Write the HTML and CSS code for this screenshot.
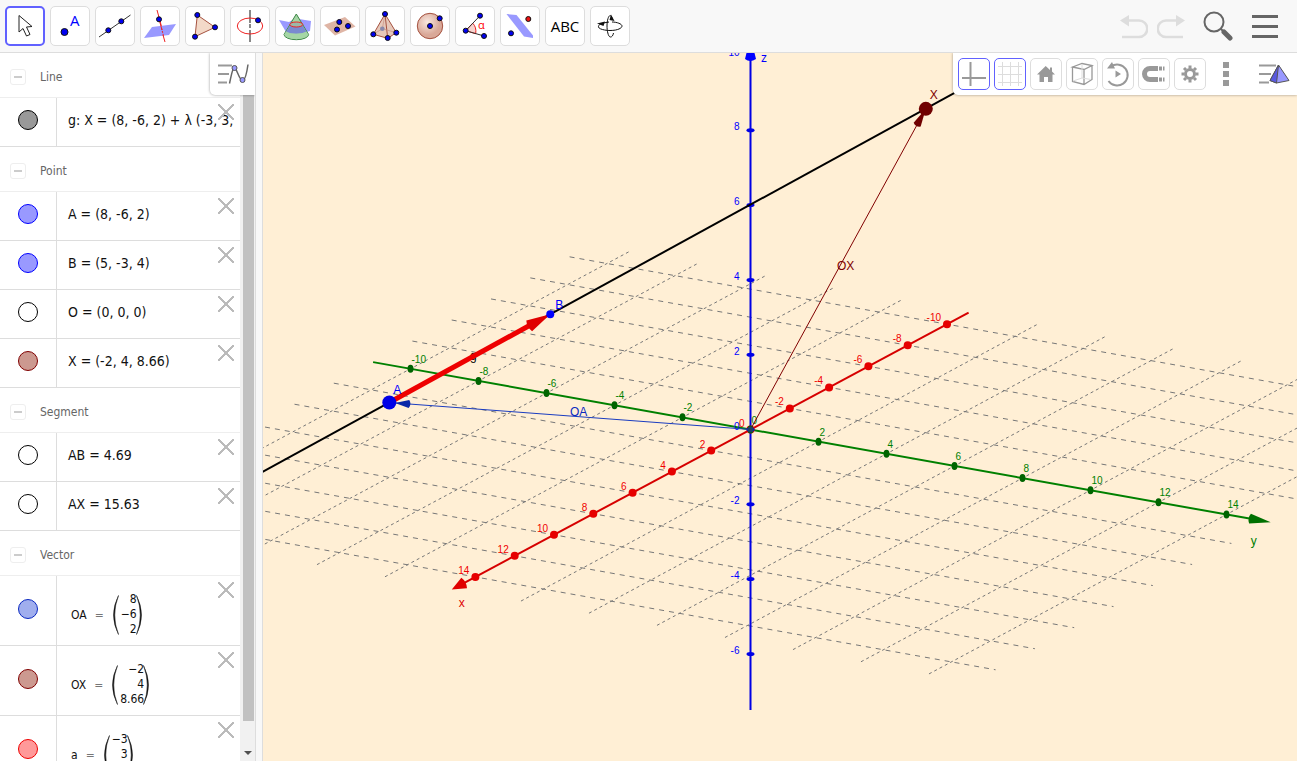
FILE: index.html
```
<!DOCTYPE html>
<html lang="en">
<head>
    <meta charset="UTF-8">
    <meta name="viewport" content="width=device-width, initial-scale=1.0">
    <title>3D Calculator</title>
    <link rel="stylesheet" href="styles.css">
</head>
<body>
    <header class="toolbar">
        <div class="tools">
            <button class="tool selected" aria-label="Move">
                <svg viewBox="0 0 40 40"><path d="M14 9.5V26l4-3.5 3.5 7.5 3.5-1.5-3.5-7.5 5.5-.5z" fill="#fff" stroke="#222"/></svg>
            </button>
            <button class="tool" aria-label="Point">
                <svg viewBox="0 0 40 40"><circle class="pt" cx="14.5" cy="26" r="3.5"/><text x="20" y="20" class="icon-a">A</text></svg>
            </button>
            <button class="tool" aria-label="Line">
                <svg viewBox="0 0 40 40"><path d="M4 31 35.5 9" stroke="#333"/><circle class="pt" cx="13.3" cy="24.3" r="2.5"/><circle class="pt" cx="26.3" cy="15.3" r="2.5"/></svg>
            </button>
            <button class="tool" aria-label="Perpendicular line">
                <svg viewBox="0 0 40 40"><path d="M17 4l6 22" stroke="#e22"/><path d="M4 32l8-11 24-3-7 11z" fill="#99f"/><path d="M19 13l3 11M23 29l2 7" stroke="#e22"/><path d="M21.5 22l2 8" stroke="#e22" stroke-dasharray="2 1"/><circle class="pt" cx="19" cy="13.3" r="2.5"/></svg>
            </button>
            <button class="tool" aria-label="Polygon">
                <svg viewBox="0 0 40 40"><path d="M12.3 9 30 21.3 10 30.7z" fill="#f3d9c8" stroke="#a55240"/><circle class="pt" cx="12.3" cy="9" r="2.5"/><circle class="pt" cx="30" cy="21.3" r="2.5"/><circle class="pt" cx="10" cy="30.7" r="2.5"/></svg>
            </button>
            <button class="tool" aria-label="Circle with axis">
                <svg viewBox="0 0 40 40"><path d="M20 4v13M20 27v9" stroke="#888" stroke-width="2"/><path d="M20 18v9" stroke="#888" stroke-dasharray="4 2" stroke-width="2"/><ellipse cx="20" cy="20" rx="12.7" ry="8" fill="none" stroke="#e22"/><circle class="pt" cx="28" cy="14.3" r="2.5"/></svg>
            </button>
            <button class="tool" aria-label="Intersect two surfaces">
                <svg viewBox="0 0 40 40"><path d="M4 14l10 2 5-3h5l12 2-1 10-11 3-13-2z" fill="#99f"/><path d="M21.3 8 9 28.500h24.600z" fill="#8cc48c"/><path d="M21.3 8 9 28.5a12.3 5.2 0 0 0 24.6 0z" fill="#a5d5a5" stroke="#3f8748"/><path d="M15.500 18.500l-4.500 7c5 3 15 3 20.500 0l-4.500-7z" fill="#7a8ad0"/><path d="M11 25.500c5 3 15 3 20.500 0l2 3a12.3 5.2 0 0 1-24.500 0z" fill="#a5d5a5" fill-opacity=".7"/><ellipse cx="21.3" cy="18.5" rx="6.5" ry="2.500" fill="#9cb8a8" stroke="#e22"/></svg>
            </button>
            <button class="tool" aria-label="Plane through 3 points">
                <svg viewBox="0 0 40 40"><path d="M4 19l21-8 10.5 9.5L15 29.5z" fill="#dfb5a5"/><circle class="pt" cx="19.3" cy="16" r="2.5"/><circle class="pt" cx="28" cy="20" r="2.5"/><circle class="pt" cx="17" cy="23.5" r="2.5"/></svg>
            </button>
            <button class="tool" aria-label="Pyramid">
                <svg viewBox="0 0 40 40"><path d="M20 8 8.300 28.300l14.400 4 8.600-5.600z" fill="#e6c8ba" stroke="#a55240"/><path d="M20 8l2.700 24.300" stroke="#a55240"/><path d="M20 8l-2.700 15M8.300 28.300l9-5.600 14 4" stroke="#c08878" stroke-width=".6"/><circle cx="17.3" cy="22.7" r="2.3" fill="#8a8aaa"/><circle class="pt" cx="20" cy="8" r="2.5"/><circle class="pt" cx="8.3" cy="28.3" r="2.5"/><circle class="pt" cx="22.7" cy="32" r="2.5"/><circle class="pt" cx="31.3" cy="26.7" r="2.5"/></svg>
            </button>
            <button class="tool" aria-label="Sphere">
                <svg viewBox="0 0 40 40">
                    <radialGradient id="ball" cx="40%" cy="35%"><stop offset="0" stop-color="#f8e8e0"/><stop offset="1" stop-color="#d9a898"/></radialGradient>
                    <circle cx="20" cy="20" r="12.7" fill="url(#ball)" stroke="#a55240"/><circle class="pt" cx="20" cy="20" r="2.5"/><circle class="pt" cx="29.7" cy="12.3" r="2.5"/>
                </svg>
            </button>
            <button class="tool" aria-label="Angle">
                <svg viewBox="0 0 40 40"><path d="M10.7 24.7l7-7.5q4 4 3 10.5z" fill="#f8d5d0" stroke="#e22"/><path d="M25 9.7 10.7 24.7 29 30" fill="none" stroke="#333"/><text x="23" y="23" class="icon-alpha">α</text><circle class="pt" cx="25" cy="9.7" r="2.5"/><circle class="pt" cx="10.7" cy="24.7" r="2.5"/><circle class="pt" cx="29" cy="30" r="2.5"/></svg>
            </button>
            <button class="tool" aria-label="Reflect about plane">
                <svg viewBox="0 0 40 40"><path d="M6.5 8l10 1L33 29.5V32l-9-1.500z" fill="#99f"/><circle class="pt red" cx="28.3" cy="13" r="2.5"/><circle class="pt" cx="11" cy="27.3" r="2.5"/></svg>
            </button>
            <button class="tool">ABC</button>
            <button class="tool" aria-label="Rotate 3D view">
                <svg viewBox="0 0 40 40"><path d="M11 17.5C3 23 16 24.5 20 24.500c8 0 12-2.500 12-4.500s-5-4-10-4" fill="none" stroke="#111"/><path d="M22 12c-2-6-5 0-5 8 0 4 1 11 3.500 11 1.500 0 2.500-1.500 3-4M19 16l-6 1" fill="none" stroke="#111"/><path d="M7 17.5l8-2-1.500 4.500zM21 8.500l3.500 6.500-5-1z" fill="#111"/></svg>
            </button>
        </div>
        <div class="actions">
            <button aria-label="Undo" disabled>
                <svg width="28" height="28" viewBox="0 0 28 28"><path d="M6 8.5h13a8 8 0 0 1 0 16.500H2" fill="none" stroke="#ddd" stroke-width="2.5"/><path d="M0 8.5 9 3v11.500z" fill="#ddd"/></svg>
            </button>
            <button aria-label="Redo" disabled>
                <svg width="28" height="28" viewBox="0 0 28 28"><path d="M22 8.5H9A8 8 0 0 0 9 25h17" fill="none" stroke="#ddd" stroke-width="2.5"/><path d="M28 8.5 19 3v11.500z" fill="#ddd"/></svg>
            </button>
            <button class="search" aria-label="Search">
                <svg width="30" height="30" viewBox="0 0 30 30"><circle cx="11" cy="11" r="9.5" fill="none" stroke="#666" stroke-width="2"/><path d="M17.5 17.5l4 4" stroke="#666" stroke-width="2"/><path d="M21 21l6 6" stroke="#666" stroke-width="5" stroke-linecap="round"/></svg>
            </button>
            <button class="menu" aria-label="Menu">
                <svg width="28" height="28" viewBox="0 0 28 28"><path d="M1 4.5h26M1 14.5h26M1 24.5h26" stroke="#666" stroke-width="3"/></svg>
            </button>
        </div>
    </header>

    <main class="workspace">
        <aside class="algebra">
            <div class="objects">
                <h2><button class="collapse" aria-label="Collapse lines"></button>Line</h2>
                <div class="row">
                    <button class="marble gray" aria-label="Show g"></button>
                    <div class="formula">g: X = (8, -6, 2) + λ (-3, 3,</div>
                    <button class="close" aria-label="Delete g"></button>
                </div>
                <h2><button class="collapse" aria-label="Collapse points"></button>Point</h2>
                <div class="row">
                    <button class="marble blue" aria-label="Show A"></button>
                    <div class="formula">A = (8, -6, 2)</div>
                    <button class="close" aria-label="Delete A"></button>
                </div>
                <div class="row">
                    <button class="marble blue" aria-label="Show B"></button>
                    <div class="formula">B = (5, -3, 4)</div>
                    <button class="close" aria-label="Delete B"></button>
                </div>
                <div class="row">
                    <button class="marble" aria-label="Show O"></button>
                    <div class="formula">O = (0, 0, 0)</div>
                    <button class="close" aria-label="Delete O"></button>
                </div>
                <div class="row">
                    <button class="marble brown" aria-label="Show X"></button>
                    <div class="formula">X = (-2, 4, 8.66)</div>
                    <button class="close" aria-label="Delete X"></button>
                </div>
                <h2><button class="collapse" aria-label="Collapse segments"></button>Segment</h2>
                <div class="row">
                    <button class="marble" aria-label="Show AB"></button>
                    <div class="formula">AB = 4.69</div>
                    <button class="close" aria-label="Delete AB"></button>
                </div>
                <div class="row">
                    <button class="marble" aria-label="Show AX"></button>
                    <div class="formula">AX = 15.63</div>
                    <button class="close" aria-label="Delete AX"></button>
                </div>
                <h2><button class="collapse" aria-label="Collapse vectors"></button>Vector</h2>
                <div class="row vector">
                    <button class="marble navy" aria-label="Show OA"></button>
                    <div class="formula">OA <span class="eq">=</span>
                        <svg class="paren" viewBox="0 0 7 40"><path d="M6.5.5q-10 19.500 0 39-7.500-19.500 0-39z"/></svg>
                        <span class="entries"><span>8</span><span>−6</span><span>2</span></span>
                        <svg class="paren right" viewBox="0 0 7 40"><path d="M.5.5q10 19.500 0 39 7.500-19.500 0-39z"/></svg>
                    </div>
                    <button class="close" aria-label="Delete OA"></button>
                </div>
                <div class="row vector">
                    <button class="marble brown" aria-label="Show OX"></button>
                    <div class="formula">OX <span class="eq">=</span>
                        <svg class="paren" viewBox="0 0 7 40"><path d="M6.5.5q-10 19.500 0 39-7.500-19.500 0-39z"/></svg>
                        <span class="entries"><span>−2</span><span>4</span><span>8.66</span></span>
                        <svg class="paren right" viewBox="0 0 7 40"><path d="M.5.5q10 19.500 0 39 7.500-19.500 0-39z"/></svg>
                    </div>
                    <button class="close" aria-label="Delete OX"></button>
                </div>
                <div class="row vector">
                    <button class="marble red" aria-label="Show a"></button>
                    <div class="formula">a <span class="eq">=</span>
                        <svg class="paren" viewBox="0 0 7 40"><path d="M6.5.5q-10 19.500 0 39-7.500-19.500 0-39z"/></svg>
                        <span class="entries"><span>−3</span><span>3</span><span>2</span></span>
                        <svg class="paren right" viewBox="0 0 7 40"><path d="M.5.5q10 19.500 0 39 7.500-19.500 0-39z"/></svg>
                    </div>
                    <button class="close" aria-label="Delete a"></button>
                </div>
            </div>
            <div class="scrollbar">
                <div class="thumb"></div>
                <div class="arrow"></div>
            </div>
            <button class="view-toggle" aria-label="Algebra view settings">
                <svg width="32" height="22" viewBox="0 0 32 22"><path d="M0 2.5h14M0 11h11M0 19.5h9" stroke="#999" stroke-width="2"/><path d="M11.500 20.500c2-9 3-16 5-16s5 14 8.500 13c2.500-1 4-9 5-16" fill="none" stroke="#666" stroke-width="1.500"/><circle cx="16.500" cy="5" r="2.5" fill="#99f" stroke="#555"/><circle cx="24.5" cy="17" r="2.5" fill="#99f" stroke="#555"/></svg>
            </button>
        </aside>
        <div class="splitter"></div>

        <section class="graphics">
            <svg id="scene" viewBox="-487 -376 1034 708" preserveAspectRatio="xMidYMid slice"></svg>
            <div class="stylebar">
                <button class="opt on" aria-label="Axes"><svg viewBox="0 0 32 32"><path d="M12.5 4v24M4 20h24" stroke="#999" stroke-width="2"/></svg></button>
                <button class="opt on" aria-label="Grid"><svg viewBox="0 0 32 32"><path d="M8.5 4v24M16.5 4v24M24.5 4v24M4 8.5h24M4 16.5h24M4 24.5h24" stroke="#ddd"/></svg></button>
                <button class="opt" aria-label="Home"><svg viewBox="0 0 32 32"><path d="M15.7 8 7 16.5h2.500V24h4.500v-5h4v5h4.500v-7.500H25l-3-3V9.500h-2V12z" fill="#999"/></svg></button>
                <button class="opt" aria-label="View direction"><svg viewBox="0 0 32 32"><path d="M6.5 9 16 5.5l10 2-8 4zM6.5 9v14.500l11.500 3 8-5V7.500M18 11.500v15" fill="none" stroke="#999" stroke-width="1.300"/><path d="M16 6v14l-9 3M16 20l9 1.500" fill="none" stroke="#ddd"/></svg></button>
                <button class="opt" aria-label="Rotate view"><svg viewBox="0 0 32 32"><path d="M9 8.5A10.500 10.500 0 1 1 6.500 23" fill="none" stroke="#999" stroke-width="2"/><path d="M5 10.5 10 4l3 6.500zM13.500 12.500l5.500 3.500-5.500 3.500z" fill="#999"/></svg></button>
                <button class="opt" aria-label="Point capturing"><svg viewBox="0 0 32 32"><path d="M20 10.5H12a5.500 5.500 0 0 0 0 11h8" fill="none" stroke="#999" stroke-width="5"/><path d="M21 10.5h5.500M21 21.500h5.500" stroke="#999" stroke-width="4" stroke-dasharray="3 1"/></svg></button>
                <button class="opt" aria-label="Settings"><svg viewBox="0 0 32 32"><circle cx="16" cy="16" r="4.5" fill="none" stroke="#999" stroke-width="3"/><path d="M16 7.5v3M16 21.5v3M7.5 16h3M21.5 16h3M10 10l2 2M20 20l2 2M10 22l2-2M20 12l2-2" stroke="#999" stroke-width="3"/></svg></button>
                <button class="more" aria-label="More"><svg width="6" height="24" viewBox="0 0 6 24"><path d="M0 0h6v6H0zM0 9h6v6H0zM0 18h6v6H0z" fill="#999"/></svg></button>
                <button class="more" aria-label="3D view settings"><svg width="32" height="22" viewBox="0 0 32 22"><path d="M0 2.5h17M0 11h12M0 19.5h10" stroke="#999" stroke-width="2"/><path d="M19.5 2 30 17.500 17.500 20 11 17.500z" fill="#99f" stroke="#555"/><path d="M19.5 2 11 17.500l6.500 2.500z" fill="#5a5ae0" stroke="#555"/></svg></button>
            </div>
        </section>
    </main>

    <script src="scene.js"></script>
</body>
</html>
```
FILE: styles.css
```
* {
    box-sizing: border-box;
}
body {
    margin: 0;
    padding: 0 2px 2px 0;
    height: 100vh;
    display: flex;
    flex-direction: column;
    overflow: hidden;
    background-color: white;
    font-family: 'Open Sans', sans-serif;
}
button {
    margin: 0;
    padding: 0;
    border: none;
    background: none;
    font-family: inherit;
    cursor: pointer;
}
svg {
    display: block;
    fill: none;
}

/* top toolbar */
.toolbar {
    flex: none;
    height: 53px;
    display: flex;
    justify-content: space-between;
    align-items: center;
    padding: 0 18px 0 5px;
    background-color: #f8f8f8;
    border-bottom: 1px solid #ddd;
}
.tools {
    display: flex;
    gap: 5px;
}
.tool {
    width: 40px;
    height: 40px;
    display: flex;
    align-items: center;
    justify-content: center;
    background-color: white;
    border: 1px solid #ddd;
    border-radius: 5px;
    font-size: 15px;
    color: black;
}
.tool.selected {
    border: 2px solid #6161ff;
}
.tool svg {
    flex: none;
    width: 40px;
    height: 40px;
}
.pt {
    fill: #0000f0;
    stroke: #111;
}
.pt.red {
    fill: #e11;
}
.icon-a {
    font-size: 15px;
    fill: #00f;
}
.icon-alpha {
    font-size: 11px;
    fill: #f00;
}
.actions {
    display: flex;
    align-items: center;
    gap: 9px;
}
.search {
    margin-left: 9px;
}
.menu {
    margin-left: 9px;
}

.workspace {
    flex: 1;
    min-height: 0;
    display: flex;
}

/* algebra view */
.algebra {
    position: relative;
    flex: none;
    width: 256px;
    display: flex;
    overflow: hidden;
    border-right: 1px solid #ddd;
    font-family: 'DejaVu Sans Condensed', 'Open Sans', sans-serif;
}
.objects {
    width: 240px;
    overflow: hidden;
}
h2 {
    margin: 0;
    height: 45px;
    padding: 4px 0 0 10px;
    display: flex;
    align-items: center;
    gap: 14px;
    border-bottom: 1px solid #eee;
    font-size: 12px;
    font-weight: normal;
    color: #666;
}
.collapse {
    width: 16px;
    height: 16px;
    display: flex;
    align-items: center;
    justify-content: center;
    border: 1px solid #eee;
    border-radius: 3px;
}
.collapse::before {
    content: "";
    width: 8px;
    height: 2px;
    background-color: #ccc;
}
.row {
    position: relative;
    height: 49px;
    display: flex;
    align-items: center;
    border-bottom: 1px solid #ddd;
}
.marble {
    flex: none;
    width: 20px;
    height: 20px;
    margin: 0 18px 4px;
    border: 1px solid black;
    border-radius: 50%;
    background-color: white;
}
.marble.gray {
    background-color: #999;
}
.marble.blue {
    background-color: #99f;
    border-color: #00f;
}
.marble.navy {
    background-color: #a0aeee;
    border-color: #0a28c0;
}
.marble.brown {
    background-color: #cc9990;
    border-color: #800000;
}
.marble.red {
    background-color: #f99;
    border-color: #e00;
}
.formula {
    flex: 1;
    min-width: 0;
    height: 100%;
    display: flex;
    align-items: center;
    padding: 0 0 4px 11px;
    border-left: 1px solid #ddd;
    font-size: 14px;
    white-space: nowrap;
    color: #111;
}
.close {
    position: absolute;
    top: 6px;
    right: 6px;
    width: 16px;
    height: 16px;
    background:
        linear-gradient(45deg, transparent 46%, #bbb 46%, #bbb 54%, transparent 54%),
        linear-gradient(-45deg, transparent 46%, #bbb 46%, #bbb 54%, transparent 54%);
}
.row.vector {
    height: 70px;
}
.vector .formula {
    padding: 8px 0 0 14px;
    font-size: 12px;
}
.eq {
    margin: 0 8px;
    color: #777;
}
.paren {
    width: 7px;
    height: 40px;
    fill: #111;
    stroke: #111;
    stroke-width: .5;
}
.paren.right {
    margin-left: -1px;
}
.entries {
    display: flex;
    flex-direction: column;
    margin-left: 2px;
    text-align: right;
    line-height: 15px;
}
.scrollbar {
    width: 15px;
    display: flex;
    flex-direction: column;
    align-items: center;
    justify-content: space-between;
    padding: 17px 1px 6px 2px;
    background-color: #f1f1f1;
}
.thumb {
    width: 11px;
    height: 95%;
    background-color: #c1c1c1;
}
.arrow {
    border: 4px solid transparent;
    border-top-color: #505050;
    border-bottom: none;
}
.view-toggle {
    position: absolute;
    top: 0;
    right: 0;
    padding: 10px 5px 10px 8px;
    background-color: white;
    border-bottom-left-radius: 5px;
    box-shadow: 0 0 3px rgba(0, 0, 0, 0.4);
}
.splitter {
    flex: none;
    width: 7px;
    background-color: #f8f8f8;
    border-right: 1px solid #ddd;
}

/* 3D view */
.graphics {
    position: relative;
    flex: 1;
    min-width: 0;
    overflow: hidden;
    background-color: #ffefd5;
}
#scene {
    width: 100%;
    height: 100%;
    font-family: 'Liberation Sans', sans-serif;
    font-size: 10px;
}
#scene .name {
    font-size: 12px;
}
.stylebar {
    position: absolute;
    top: 0;
    right: 0;
    height: 42px;
    display: flex;
    align-items: center;
    gap: 4px;
    padding: 0 6px 0 5px;
    background-color: white;
    border-bottom-left-radius: 5px;
    box-shadow: 0 0 3px rgba(0, 0, 0, 0.4);
}
.opt {
    width: 32px;
    height: 32px;
    display: flex;
    align-items: center;
    justify-content: center;
    border: 1px solid #ddd;
    border-radius: 5px;
}
.opt.on {
    border-color: #6161ff;
}
.opt svg {
    flex: none;
    width: 32px;
    height: 32px;
}
.more {
    margin: 0 13px;
}
.more:last-child {
    margin-right: 0;
}
```
FILE: scene.js
```
const scene = document.getElementById('scene');

// pixels per unit along each axis
function project(x, y, z) {
    return [0.5 - 19.65 * x + 34 * y, 0.5 + 10.53 * x + 6.07 * y - 37.4 * z];
}

function add(tag, attrs, text) {
    const el = document.createElementNS('http://www.w3.org/2000/svg', tag);
    for (const key in attrs) {
        el.setAttribute(key, attrs[key]);
    }
    if (text !== undefined) {
        el.textContent = text;
    }
    scene.appendChild(el);
}

function line(p, q, color, width, dash) {
    add('line', {
        x1: p[0], y1: p[1], x2: q[0], y2: q[1],
        stroke: color, 'stroke-width': width, 'stroke-dasharray': dash || 'none'
    });
}

function dot(p, color, rx, ry) {
    add('ellipse', { cx: p[0], cy: p[1], rx: rx, ry: ry || rx, fill: color });
}

function label(p, dx, dy, text, color, anchor, cls) {
    add('text', {
        x: p[0] + dx, y: p[1] + dy, fill: color,
        'text-anchor': anchor || 'start', class: cls || ''
    }, text);
}

// arrow head with its tip at q, pointing away from p
function head(p, q, color, length, half) {
    const d = Math.hypot(q[0] - p[0], q[1] - p[1]);
    const ux = (q[0] - p[0]) / d;
    const uy = (q[1] - p[1]) / d;
    const bx = q[0] - ux * length;
    const by = q[1] - uy * length;
    add('path', {
        d: `M${q[0]} ${q[1]}L${bx - uy * half} ${by + ux * half}` +
           `Q${bx - ux * 3} ${by - uy * 3} ${bx + uy * half} ${by - ux * half}Z`,
        fill: color
    });
}

const MIN = -11.1;
const MAX_X = 15.2;
const MAX_Y = 15.3;
const O = project(0, 0, 0);
const A = project(8, -6, 2);
const B = project(5, -3, 4);
const X = project(-2, 4, 8.66);

// grid
for (let i = -10; i <= 14; i += 2) {
    if (i === 0) continue;
    line(project(i, MIN, 0), project(i, MAX_Y, 0), '#777777', 1, '5 5');
    line(project(MIN, i, 0), project(MAX_X, i, 0), '#777777', 1, '3 3');
}

// axes
const xEnd = project(MAX_X, 0, 0);
const yEnd = project(0, MAX_Y, 0);
line(project(0, 0, -7.5), project(0, 0, 11), '#0000e6', 2);
line(project(0, MIN, 0), project(0, 14.8, 0), '#008000', 2);
line(project(MIN, 0, 0), project(14.8, 0, 0), '#d60000', 2);
head(O, xEnd, '#e00000', 14, 6);
head(O, yEnd, '#007000', 21, 5);

for (let i = -10; i <= 14; i += 2) {
    const px = project(i, 0, 0);
    const py = project(0, i, 0);
    dot(px, '#e60000', 4);
    dot(py, '#006400', 3, 4);
    label(px, -6, -3, i, '#f00000', 'end');
    label(py, 1, -6, i, '#008000');
}
for (let i = -6; i <= 10; i += 2) {
    const pz = project(0, 0, i);
    dot(pz, '#0000e6', 4, 2);
    label(pz, -11, 0, i, '#0000ff', 'end');
}
add('path', { d: 'M-5-370q5 4 11 0l-2-8h-7z', fill: '#0000ff' });
label(xEnd, 7, 17, 'x', '#e00000', 'start', 'name');
label(yEnd, -20, 23, 'y', '#008000', 'start', 'name');
label([11, -367], 0, 0, 'z', '#0000ff', 'start', 'name');

// line g
line(project(13, -11, -1.33), project(-4, 6, 10), '#000000', 2);
label([-280, -69], 0, 0, 'g', '#000000', 'start', 'name');

// vectors
line(O, A, '#1a3cc0', 1);
head(O, [-355, -26], '#0a28a8', 14, 4);
label([-180, -13], 0, 0, 'OA', '#0a28c0', 'start', 'name');
line(O, X, '#800000', 1);
head(O, X, '#700000', 18, 4);
label([87, -159], 0, 0, 'OX', '#800000', 'start', 'name');
line(A, [-216, -106], '#ee0000', 5);
head(A, B, '#e00000', 24, 6);

// points
dot(O, '#204060', 3);
dot(A, '#0000e6', 7);
dot(B, '#0000ff', 4);
dot(X, '#700000', 7);
label(A, 4, -9, 'A', '#0000ff', 'start', 'name');
label(B, 5, -5, 'B', '#0000ff', 'start', 'name');
label(X, 4, -10, 'X', '#800000', 'start', 'name');
```
